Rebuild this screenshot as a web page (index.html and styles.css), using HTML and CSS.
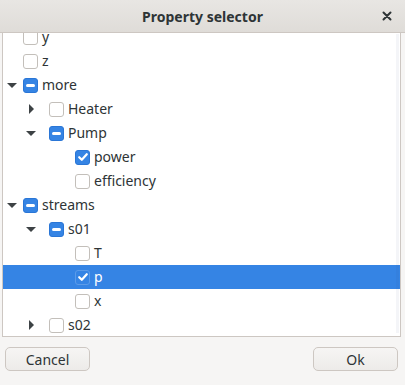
FILE: index.html
```html
<!DOCTYPE html>
<html>
<head>
  <title>Property selector</title>
  <link rel="stylesheet" href="styles.css">
</head>
<body>
  <div class="dialog">
    <div class="titlebar">
      <span></span>
      <span class="title">Property selector</span>
      <span class="tb-right">
        <button class="close" title="Close">
          <svg width="10" height="10" viewBox="0 0 10 10"><path d="M1.5 1.5 L8.5 8.5 M8.5 1.5 L1.5 8.5" stroke="#2e3436" stroke-width="2" stroke-linecap="round"/></svg>
        </button>
      </span>
    </div>

    <div class="content">
      <div class="tree">
        <div class="rows">
          <div class="row lv0"><span class="exp"></span><span class="cb"></span><span class="label">y</span></div>
          <div class="row lv0"><span class="exp"></span><span class="cb"></span><span class="label">z</span></div>
          <div class="row lv0"><span class="exp open"></span><span class="cb mixed"></span><span class="label">more</span></div>
          <div class="row lv1"><span class="exp closed"></span><span class="cb"></span><span class="label">Heater</span></div>
          <div class="row lv1"><span class="exp open"></span><span class="cb mixed"></span><span class="label">Pump</span></div>
          <div class="row lv2"><span class="exp"></span><span class="cb checked"></span><span class="label">power</span></div>
          <div class="row lv2"><span class="exp"></span><span class="cb"></span><span class="label">efficiency</span></div>
          <div class="row lv0"><span class="exp open"></span><span class="cb mixed"></span><span class="label">streams</span></div>
          <div class="row lv1"><span class="exp open"></span><span class="cb mixed"></span><span class="label">s01</span></div>
          <div class="row lv2"><span class="exp"></span><span class="cb"></span><span class="label">T</span></div>
          <div class="row lv2 sel"><span class="exp"></span><span class="cb checked"></span><span class="label">p</span></div>
          <div class="row lv2"><span class="exp"></span><span class="cb"></span><span class="label">x</span></div>
          <div class="row lv1"><span class="exp closed"></span><span class="cb"></span><span class="label">s02</span></div>
        </div>
        <div class="scrollbar"></div>
      </div>

      <div class="actions">
        <button class="btn">Cancel</button>
        <button class="btn">Ok</button>
      </div>
    </div>
  </div>

  <script>
    // draw expander arrows and checkbox marks
    var down = '<svg width="10" height="5" viewBox="0 0 10 5"><polygon points="0,0 10,0 5,5" fill="#3d4245"/></svg>';
    var right = '<svg width="5" height="10" viewBox="0 0 5 10"><polygon points="0,0 5,5 0,10" fill="#3d4245"/></svg>';
    var check = '<svg width="14" height="14" viewBox="0 0 14 14"><path d="M3.2 7.2 L5.8 9.8 L10.8 4.2" fill="none" stroke="#fff" stroke-width="2.2" stroke-linecap="round" stroke-linejoin="round"/></svg>';

    document.querySelectorAll('.exp.open').forEach(function(el) { el.innerHTML = down; });
    document.querySelectorAll('.exp.closed').forEach(function(el) { el.innerHTML = right; });
    document.querySelectorAll('.cb.checked').forEach(function(el) { el.innerHTML = check; });
  </script>
</body>
</html>
```

FILE: styles.css
```css
html, body {
  margin: 0;
  padding: 0;
}

body {
  width: 405px;
  height: 385px;
  overflow: hidden;
  font-family: "Noto Sans", "DejaVu Sans", sans-serif;
  font-size: 14px;
  color: #2e3436;
  background-color: #f6f5f4;
}

.titlebar {
  height: 32px;
  display: grid;
  grid-template-columns: 1fr auto 1fr;
  align-items: center;
  background: linear-gradient(#e8e6e3, #dfdcd8);
  border-bottom: 1px solid #cdc7c2;
}

.title {
  font-weight: bold;
  font-size: 14px;
  color: #2e3436;
}

.tb-right {
  display: flex;
  justify-content: flex-end;
  padding-right: 6px;
}

.close {
  width: 24px;
  height: 24px;
  border: none;
  background: none;
  padding: 0;
  display: flex;
  justify-content: center;
  align-items: center;
}

.content {
  padding: 0 4px 0 2px;
}

.tree {
  position: relative;
  height: 303px;
  background-color: #fff;
  border: 1px solid #cdc7c2;
  border-top: none;
  overflow: hidden;
}

.rows {
  margin-top: -8px;
}

.row {
  height: 24px;
  display: flex;
  align-items: center;
  white-space: nowrap;
}

.exp {
  width: 16px;
  height: 24px;
  display: flex;
  justify-content: center;
  align-items: center;
}

.lv0 .exp { margin: 0 3px 0 1px; }
.lv1 .exp { margin: 0 10px 0 20px; }
.lv2 .exp { margin: 0 17px 0 39px; }

.cb {
  box-sizing: border-box;
  width: 15px;
  height: 15px;
  border: 1px solid #c3bfba;
  border-radius: 3px;
  background-color: #fff;
  display: flex;
  justify-content: center;
  align-items: center;
}

.cb svg {
  flex: none;
}

.cb.checked,
.cb.mixed {
  background-color: #3584e4;
  border-color: #2a76d6;
}

.cb.mixed::after {
  content: "";
  width: 9px;
  height: 3px;
  border-radius: 2px;
  background-color: #fff;
}

.label {
  margin-left: 4px;
  line-height: 24px;
}

.row.sel {
  background-color: #3584e4;
  color: #fff;
}

.row.sel .cb.checked {
  border-color: #5b9be9;
}

.scrollbar {
  position: absolute;
  top: 1px;
  right: 1px;
  bottom: 3px;
  width: 3px;
  background-color: rgba(40, 60, 120, 0.05);
}

.actions {
  display: flex;
  justify-content: space-between;
  margin-top: 10px;
  padding: 0 3px 0 3px;
}

.btn {
  width: 85px;
  height: 24px;
  font-family: "Noto Sans", "DejaVu Sans", sans-serif;
  font-size: 14px;
  color: #2e3436;
  background: linear-gradient(#f6f5f4, #edebe9);
  border: 1px solid #cdc7c2;
  border-radius: 5px;
  padding: 0;
}
```
